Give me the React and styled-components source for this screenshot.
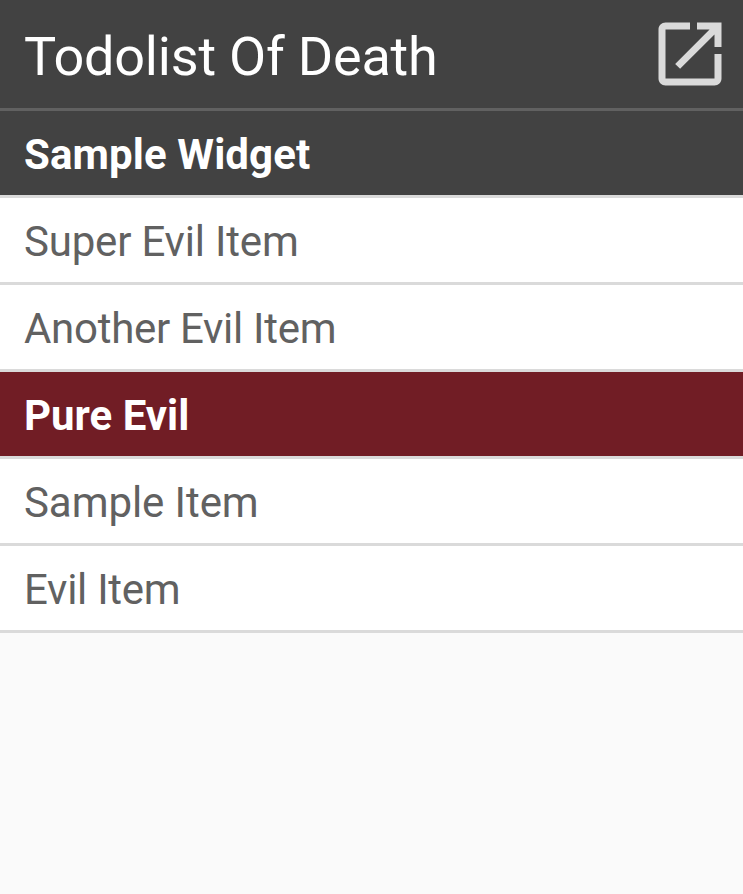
import React from "react";
import styled, { createGlobalStyle } from "styled-components";

const GlobalStyle = createGlobalStyle`
  body { margin: 0; background: #fafafa; }
`;

const Widget = styled.main`
  min-height: 894px;
  background: #fafafa;
  font-family: Roboto, sans-serif;
`;

const Header = styled.header`
  box-sizing: border-box;
  display: flex;
  align-items: center;
  justify-content: space-between;
  height: 108px;
  padding: 0 11px 0 24px;
  background: #424242;
`;

const Title = styled.h1`
  margin: 0;
  color: #fff;
  font-size: 54px;
  font-weight: 400;
  line-height: 64px;
  letter-spacing: -0.2px;
  padding-top: 5px;
`;

const OpenButton = styled.button`
  display: flex;
  padding: 0;
  border: 0;
  background: none;
  color: #dadada;
`;

const Divider = styled.div`
  height: 3px;
  background: ${(p) => p.$color || "#dadada"};
`;

const Row = styled.div`
  display: flex;
  align-items: center;
  height: 84px;
  padding: 3px 24px 0;
  box-sizing: border-box;
  background: ${(p) => p.$background || "#fff"};
  color: ${(p) => (p.$background ? "#fff" : "#616161")};
  font-size: 42px;
  font-weight: ${(p) => (p.$background ? 700 : 400)};
  line-height: 50px;
  letter-spacing: ${(p) => p.$tracking || 0}px;
`;

const rows = [
  { label: "Sample Widget", background: "#424242", tracking: 0.1 },
  { label: "Super Evil Item", tracking: -0.19 },
  { label: "Another Evil Item", tracking: -0.29 },
  { label: "Pure Evil", background: "#711d25" },
  { label: "Sample Item", tracking: -0.07 },
  { label: "Evil Item", tracking: -0.27 },
];

export default function App() {
  return (
    <Widget>
      <GlobalStyle />
      <Header>
        <Title>Todolist Of Death</Title>
        <OpenButton aria-label="Open list">
          <svg width="84" height="84" viewBox="0 0 24 24" fill="currentColor">
            <path d="M19 19H5V5h7V3H5c-1.110 0-2 .9-2 2v14c0 1.100.890 2 2 2h14c1.100 0 2-.9 2-2v-7h-2v7zM14 3v2h3.590l-9.830 9.830 1.410 1.410L19 6.410V10h2V3h-7z" />
          </svg>
        </OpenButton>
      </Header>
      <Divider $color="#616161" />
      {rows.map((row) => (
        <React.Fragment key={row.label}>
          <Row $background={row.background} $tracking={row.tracking}>
            {row.label}
          </Row>
          <Divider />
        </React.Fragment>
      ))}
    </Widget>
  );
}
